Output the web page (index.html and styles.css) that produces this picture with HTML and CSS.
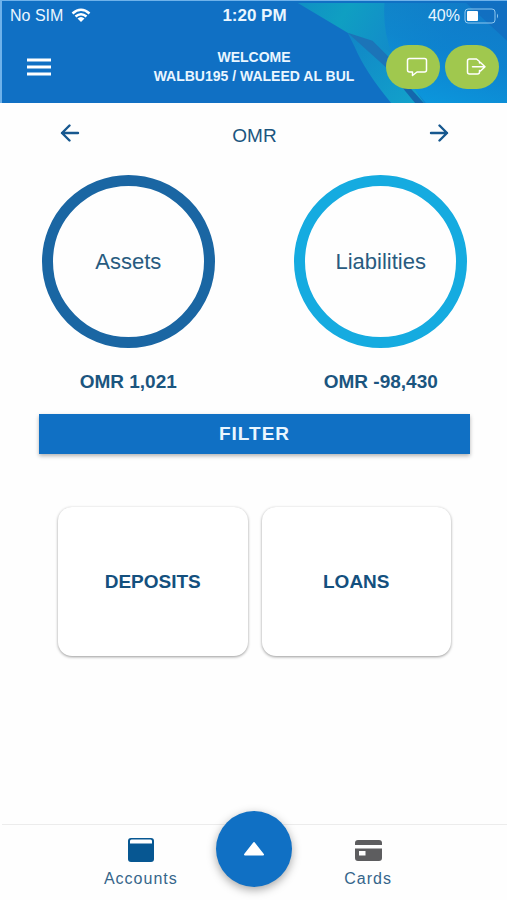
FILE: index.html
```html
<!DOCTYPE html>
<html lang="en">
<head>
  <meta charset="UTF-8">
  <meta name="viewport" content="width=device-width, initial-scale=1.0">
  <title>Accounts</title>
  <link rel="stylesheet" href="styles.css">
</head>
<body>
  <header class="header">
    <!-- Background artwork -->
    <svg class="header-art" viewBox="0 0 507 104" preserveAspectRatio="xMaxYMin slice" aria-hidden="true">
      <defs>
        <linearGradient id="teal" gradientUnits="userSpaceOnUse" x1="300" y1="0" x2="430" y2="70">
          <stop offset="0" stop-color="#1090c4"/>
          <stop offset="0.3" stop-color="#0f9fc2"/>
          <stop offset="0.6" stop-color="#1290c8"/>
          <stop offset="1" stop-color="#0f80cc"/>
        </linearGradient>
        <linearGradient id="sky" gradientUnits="userSpaceOnUse" x1="470" y1="0" x2="440" y2="104">
          <stop offset="0" stop-color="#1179c6"/>
          <stop offset="0.5" stop-color="#0d83d0"/>
          <stop offset="1" stop-color="#0a9fe2"/>
        </linearGradient>
        <linearGradient id="edge" gradientUnits="userSpaceOnUse" x1="350" y1="34" x2="415" y2="104">
          <stop offset="0" stop-color="#1186c6"/>
          <stop offset="1" stop-color="#12a2cb"/>
        </linearGradient>
      </defs>
      <path d="M297 2L507 2V104H425L385 66L347 32Z" fill="url(#teal)"/>
      <path d="M347 32L388 50L425 104H392Q365 72 354 46Z" fill="url(#edge)"/>
      <path d="M347 32L372 40L410 78L386 67Z" fill="#1c74b8"/>
      <path d="M384 2H507V104H427Q404 78 392 54Q382 30 384 2Z" fill="url(#sky)" opacity="0.7"/>
      <path d="M466 2H507V40Z" fill="#1268bd" opacity="0.6"/>
      <path d="M405 82L425 104H416L398 82Z" fill="#1467ad"/>
    </svg>

    <div class="status-bar">
      <div class="status-left">
        <span>No SIM</span>
        <svg width="20" height="15" viewBox="0 0 20 15" aria-hidden="true">
          <path d="M1.500 5.500Q10-2 18.500 5.500M4.500 8.500Q10 4 15.500 8.500" fill="none" stroke="#fff" stroke-width="2.500"/>
          <path d="M6.500 10.500Q10 7.500 13.500 10.500L10 14Z" fill="#fff"/>
        </svg>
      </div>
      <span class="status-time">1:20 PM</span>
      <div class="status-right">
        <span>40%</span>
        <svg width="35" height="16" viewBox="0 0 35 16" aria-hidden="true">
          <rect x="1" y="1" width="30" height="14" rx="3" fill="none" stroke="#8fc8ef"/>
          <rect x="3" y="3" width="11" height="10" rx="1" fill="#fff"/>
          <path d="M33 5.500Q35 8 33 10.500Z" fill="#8fc8ef"/>
        </svg>
      </div>
    </div>

    <div class="title-bar">
      <button class="menu-btn" aria-label="Menu">
        <svg width="24" height="18" viewBox="0 0 24 18" aria-hidden="true">
          <path d="M0 2H24M0 9H24M0 16H24" stroke="#fff" stroke-width="3"/>
        </svg>
      </button>
      <div class="welcome">
        <div>WELCOME</div>
        <div>WALBU195 / WALEED AL BUL</div>
      </div>
      <div class="actions">
        <button class="action-btn" aria-label="Messages">
          <svg width="22" height="20" viewBox="0 0 22 20" aria-hidden="true">
            <path d="M3.500 1.500H18.500Q20.500 1.500 20.500 3.500V13Q20.500 15 18.500 15H11L6.500 18.500V15H3.500Q1.500 15 1.500 13V3.500Q1.500 1.500 3.500 1.500Z" fill="none" stroke="#fff" stroke-width="1.500" stroke-linejoin="round"/>
          </svg>
        </button>
        <button class="action-btn" aria-label="Log out">
          <svg width="22" height="20" viewBox="0 0 22 20" aria-hidden="true">
            <path d="M14.500 6V4.500L11.500 2H4.500Q2.500 2 2.500 4V15Q2.500 17 4.500 17H12.500Q14.500 17 14.500 15V13.500M7.500 9.700H19M15.500 5.500L20 9.700L15.500 14" fill="none" stroke="#fff" stroke-width="1.500" stroke-linejoin="round" stroke-linecap="round"/>
          </svg>
        </button>
      </div>
    </div>
  </header>

  <main class="content">
    <div class="currency">
      <button class="arrow-btn" aria-label="Previous currency">
        <svg width="20" height="18" viewBox="0 0 20 18" aria-hidden="true">
          <path d="M18 9H2M9.500 1.500L2 9L9.500 16.500" fill="none" stroke="#17588f" stroke-width="2.400" stroke-linecap="round" stroke-linejoin="round"/>
        </svg>
      </button>
      <span class="currency-name">OMR</span>
      <button class="arrow-btn" aria-label="Next currency">
        <svg width="20" height="18" viewBox="0 0 20 18" aria-hidden="true">
          <path d="M2 9H18M10.500 1.500L18 9L10.500 16.500" fill="none" stroke="#17588f" stroke-width="2.400" stroke-linecap="round" stroke-linejoin="round"/>
        </svg>
      </button>
    </div>

    <div class="totals">
      <div class="total">
        <div class="ring ring-assets">Assets</div>
        <div class="amount">OMR 1,021</div>
      </div>
      <div class="total">
        <div class="ring ring-liabilities">Liabilities</div>
        <div class="amount">OMR -98,430</div>
      </div>
    </div>

    <button class="filter-btn">FILTER</button>

    <div class="cards">
      <button class="card">DEPOSITS</button>
      <button class="card">LOANS</button>
    </div>
  </main>

  <nav class="tab-bar">
    <a class="tab" href="#accounts">
      <svg width="28" height="26" viewBox="0 0 28 26" aria-hidden="true">
        <rect x="1" y="1" width="26" height="24" rx="3" fill="#075792"/>
        <path d="M3 4Q3 2.500 4.500 2.500H23.500Q25 2.500 25 4V6.500H3Z" fill="#fff"/>
      </svg>
      <span>Accounts</span>
    </a>
    <button class="fab" aria-label="Quick actions">
      <svg width="22" height="16" viewBox="0 0 22 16" aria-hidden="true">
        <path d="M11 2L20 13.500H2Z" fill="#fff" stroke="#fff" stroke-width="2" stroke-linejoin="round"/>
      </svg>
    </button>
    <a class="tab" href="#cards">
      <svg width="28" height="26" viewBox="0 0 28 26" aria-hidden="true">
        <path d="M1 8V6Q1 3 4 3H25Q28 3 28 6V8Z" fill="#5d5d5f"/>
        <path fill-rule="evenodd" d="M1 11.500H28V21Q28 24 25 24H4Q1 24 1 21ZM5 14V18.500H11.500V14Z" fill="#5d5d5f"/>
      </svg>
      <span>Cards</span>
    </a>
  </nav>
</body>
</html>
```
FILE: styles.css
```css
/* General page styles */
* {
  box-sizing: border-box;
}

body {
  margin: 0;
  padding-left: 2px;
  min-height: 100vh;
  display: flex;
  flex-direction: column;
  background: #fefefe;
  font-family: "Liberation Sans", Arial, sans-serif;
  color: #1b557f;
}

button {
  margin: 0;
  padding: 0;
  border: none;
  background: none;
  font: inherit;
  color: inherit;
  cursor: pointer;
}

svg {
  display: block;
}

/* Header */
.header {
  position: relative;
  margin-left: -2px;
  background: #1070c4;
  color: #eaf6ff;
  border-top: 1px solid #6fb2ea;
  border-left: 2px solid #6fb2ea;
}

/* Artwork lies behind the header content */
.header-art {
  position: absolute;
  inset: 0;
  width: 100%;
  height: 100%;
}

.status-bar {
  position: relative;
  display: grid;
  grid-template-columns: 1fr auto 1fr;
  align-items: center;
  height: 29px;
  padding: 0 8px;
  font-size: 16px;
}

.status-left,
.status-right {
  display: flex;
  align-items: center;
  gap: 8px;
}

.status-right {
  justify-content: flex-end;
  gap: 4px;
}

.status-time {
  font-size: 17px;
  font-weight: bold;
}

.title-bar {
  position: relative;
  display: grid;
  grid-template-columns: 1fr auto 1fr;
  align-items: center;
  height: 73px;
  padding: 0 8px 0 25px;
}

.menu-btn {
  justify-self: start;
}

.welcome {
  padding-right: 18px;
  font-size: 14px;
  font-weight: bold;
  line-height: 19px;
  text-align: center;
  white-space: nowrap;
}

.actions {
  display: flex;
  justify-content: flex-end;
  gap: 5px;
}

.action-btn {
  display: flex;
  align-items: center;
  justify-content: center;
  width: 54px;
  height: 44px;
  padding-left: 8px;
  border-radius: 24px;
  background: #a0c84e;
}

/* Currency switcher */
.content {
  flex: 1;
}

.currency {
  display: flex;
  align-items: center;
  justify-content: space-between;
  height: 65px;
  padding: 0 58px;
}

.arrow-btn {
  padding-bottom: 6px;
}

.currency-name {
  font-size: 19px;
}

/* Totals */
.totals {
  display: grid;
  grid-template-columns: 1fr 1fr;
  padding-top: 7px;
}

.total {
  display: flex;
  flex-direction: column;
  align-items: center;
  gap: 22px;
}

.ring {
  display: flex;
  align-items: center;
  justify-content: center;
  width: 173px;
  height: 173px;
  border: 11px solid;
  border-radius: 50%;
  font-size: 22px;
}

.ring-assets {
  border-color: #1a66a3;
}

.ring-liabilities {
  border-color: #15abe0;
}

.ring {
  color: #285b80;
}

.amount {
  font-size: 19px;
  font-weight: bold;
  line-height: 24px;
}

.filter-btn {
  display: block;
  width: calc(100% - 74px);
  height: 40px;
  margin: 20px auto 0;
  background: #1070c4;
  color: #eaf6ff;
  font-size: 19px;
  font-weight: bold;
  letter-spacing: 1px;
  box-shadow: 0 2px 4px rgba(0, 0, 0, 0.3);
}

/* Deposits and loans */
.cards {
  display: grid;
  grid-template-columns: 1fr 1fr;
  gap: 14px;
  padding: 53px 56px 24px;
}

.card {
  height: 149px;
  border-radius: 14px;
  background: #fff;
  font-size: 19px;
  font-weight: bold;
  color: #14507e;
  box-shadow: 0 1px 3px rgba(0, 0, 0, 0.4);
}

/* Bottom tab bar */
.tab-bar {
  display: grid;
  grid-template-columns: 1fr 1fr 1fr;
  height: 76px;
  padding: 0 82px;
  border-top: 1px solid #ececec;
}

.tab {
  display: flex;
  flex-direction: column;
  align-items: center;
  gap: 6px;
  padding-top: 12px;
  color: #35658a;
  font-size: 16px;
  line-height: 20px;
  letter-spacing: 1px;
  text-decoration: none;
}

.fab {
  display: flex;
  align-items: center;
  justify-content: center;
  justify-self: center;
  width: 76px;
  height: 76px;
  margin-top: -14px;
  border-radius: 50%;
  background: #1070c4;
  box-shadow: 0 3px 10px rgba(0, 0, 0, 0.35);
}
```
